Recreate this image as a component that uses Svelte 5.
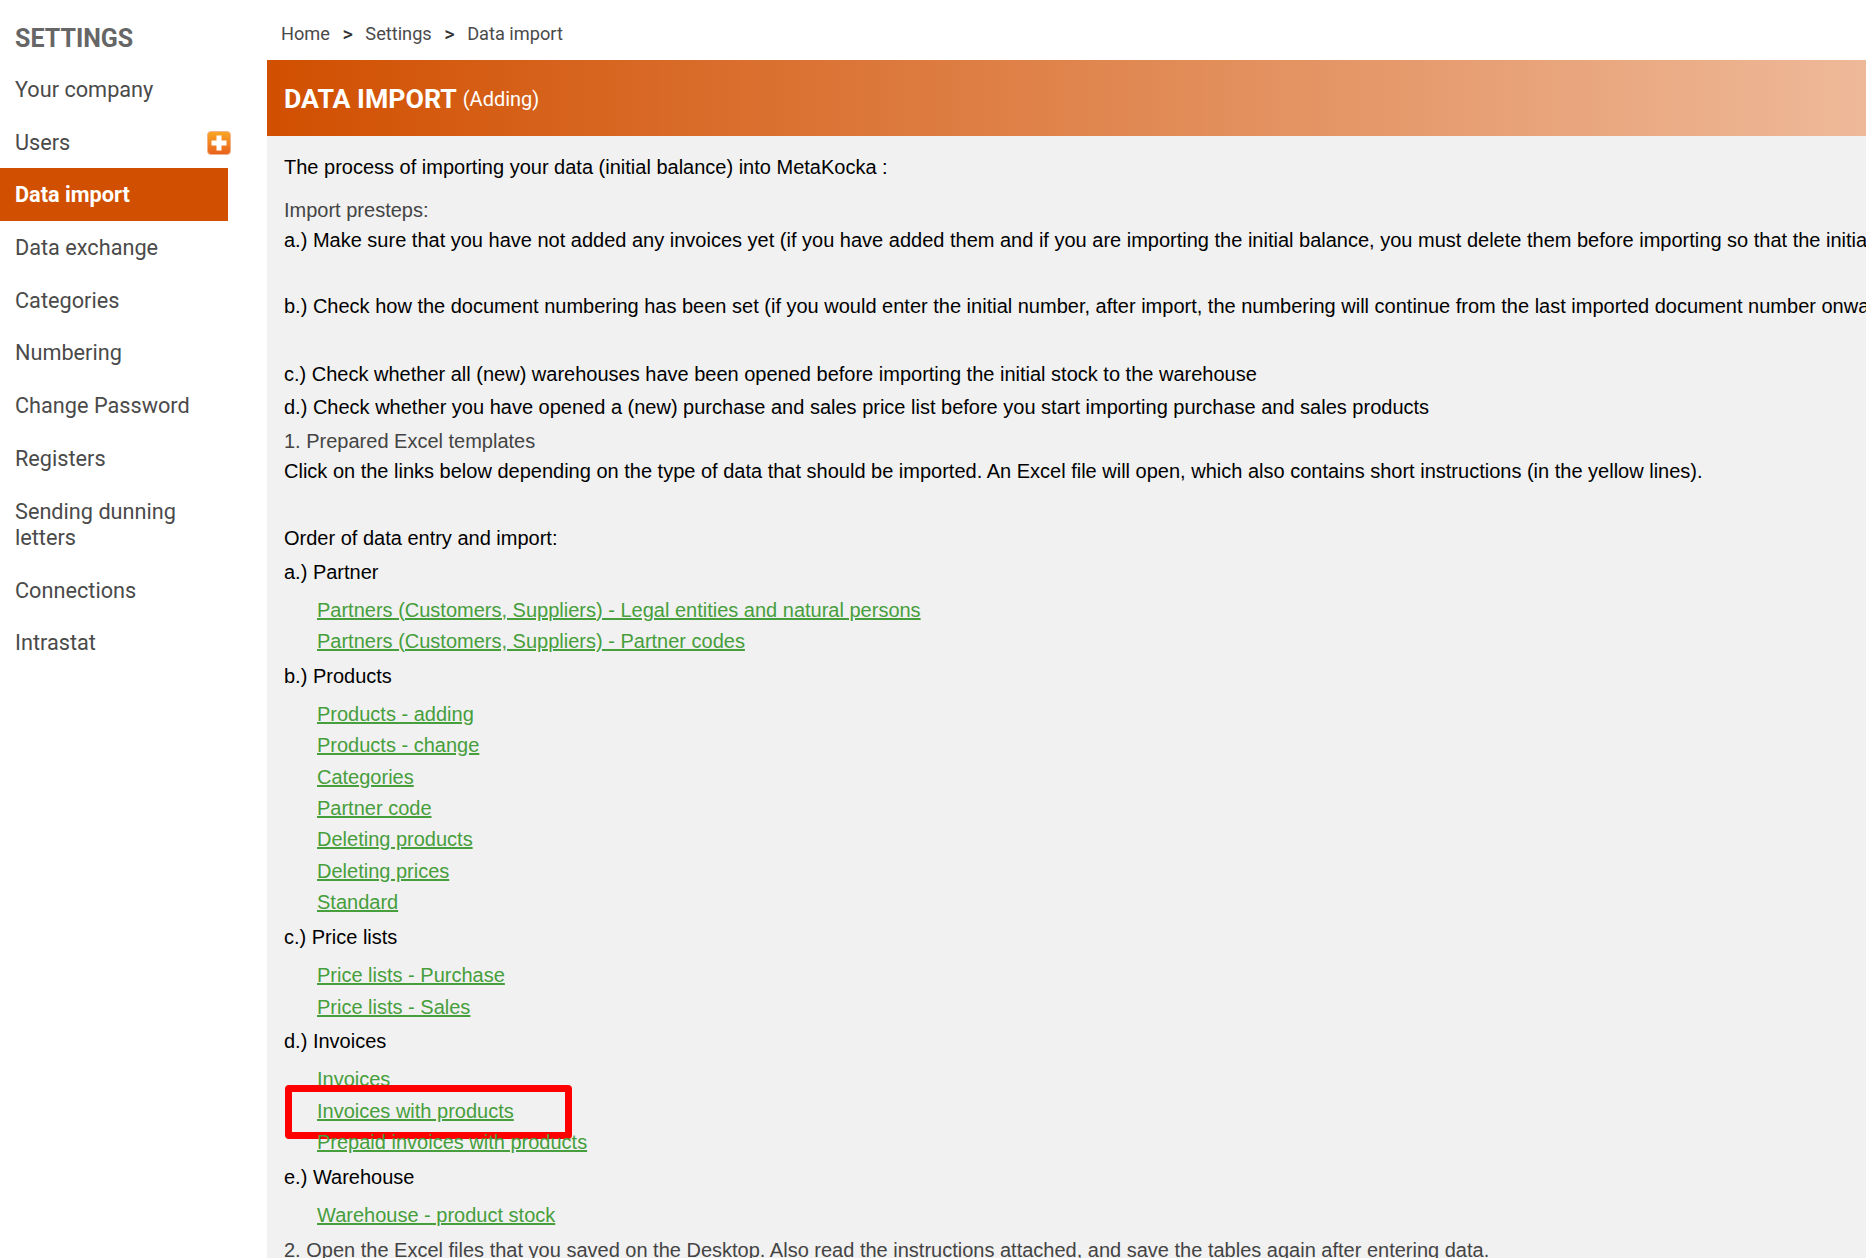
<script lang="ts">
	const menu = [
		{ label: 'Your company' },
		{ label: 'Users', add: true },
		{ label: 'Data import', active: true },
		{ label: 'Data exchange' },
		{ label: 'Categories' },
		{ label: 'Numbering' },
		{ label: 'Change Password' },
		{ label: 'Registers' },
		{ label: 'Sending dunning letters' },
		{ label: 'Connections' },
		{ label: 'Intrastat' },
	];

	const groups = [
		{
			title: 'a.) Partner',
			links: [
				'Partners (Customers, Suppliers) - Legal entities and natural persons',
				'Partners (Customers, Suppliers) - Partner codes',
			],
		},
		{
			title: 'b.) Products',
			links: [
				'Products - adding',
				'Products - change',
				'Categories',
				'Partner code',
				'Deleting products',
				'Deleting prices',
				'Standard',
			],
		},
		{ title: 'c.) Price lists', links: ['Price lists - Purchase', 'Price lists - Sales'] },
		{ title: 'd.) Invoices', links: ['Invoices', 'Invoices with products', 'Prepaid invoices with products'] },
		{ title: 'e.) Warehouse', links: ['Warehouse - product stock'] },
	];
</script>

<div class="page">
	<aside class="sidebar">
		<h2>SETTINGS</h2>
		<nav>
			{#each menu as item (item.label)}
				<a href="#top" class="item" class:active={item.active}>
					<span>{item.label}</span>
					{#if item.add}
						<svg class="add" width="24" height="24" viewBox="0 0 24 24" aria-hidden="true">
							<defs>
								<linearGradient id="addfill" x1="0" y1="0" x2="0" y2="1">
									<stop offset="0" stop-color="#f9a825" />
									<stop offset="1" stop-color="#e8601c" />
								</linearGradient>
							</defs>
							<rect x="0.5" y="0.5" width="23" height="23" rx="3.5" fill="url(#addfill)" stroke="#f0b48c" />
							<path d="M9.5 4.5h5v5h5v5h-5v5h-5v-5h-5v-5h5z" fill="#fff" />
						</svg>
					{/if}
				</a>
			{/each}
		</nav>
	</aside>

	<main>
		<div class="crumbs">
			<span>Home</span><b>&gt;</b><span>Settings</span><b>&gt;</b><span>Data import</span>
		</div>
		<header class="banner">
			<h1>DATA IMPORT</h1>
			<small>(Adding)</small>
		</header>
		<section class="body">
			<p class="intro">The process of importing your data (initial balance) into MetaKocka :</p>
			<p class="sub first">Import presteps:</p>
			<p class="after">a.) Make sure that you have not added any invoices yet (if you have added them and if you are importing the initial balance, you must delete them before importing so that the initial balance is correct)</p>
			<p class="blank"></p>
			<p>b.) Check how the document numbering has been set (if you would enter the initial number, after import, the numbering will continue from the last imported document number onwards)</p>
			<p class="blank narrow"></p>
			<p>c.) Check whether all (new) warehouses have been opened before importing the initial stock to the warehouse</p>
			<p>d.) Check whether you have opened a (new) purchase and sales price list before you start importing purchase and sales products</p>
			<p class="sub">1. Prepared Excel templates</p>
			<p class="after">Click on the links below depending on the type of data that should be imported. An Excel file will open, which also contains short instructions (in the yellow lines).</p>
			<p class="blank wide"></p>
			<p>Order of data entry and import:</p>

			{#each groups as group (group.title)}
				<p class="group">{group.title}</p>
				<ul>
					{#each group.links as link (link)}
						<li>
							<a href="#top">{link}</a>
							{#if link === 'Invoices with products'}
								<span class="marker"></span>
							{/if}
						</li>
					{/each}
				</ul>
			{/each}

			<p class="sub tail">2. Open the Excel files that you saved on the Desktop. Also read the instructions attached, and save the tables again after entering data.</p>
		</section>
	</main>
</div>

<style>
	:global(body) {
		margin: 0;
		background: #fff;
		overflow: hidden;
	}

	.page {
		display: flex;
		width: 1866px;
		height: 1258px;
		overflow: hidden;
	}

	.sidebar {
		flex: 0 0 267px;
		font-family: Roboto, sans-serif;
		font-size: 21.7px;
		color: #4a4a4a;
	}

	h2 {
		margin: 0;
		padding: 24px 0 0 15px;
		font-size: 25px;
		line-height: 30px;
		font-weight: 700;
		color: #666;
	}

	nav {
		width: 228px;
		margin-top: 9px;
	}

	.item {
		position: relative;
		display: block;
		padding: 14px 15px 12.2px;
		line-height: 26.5px;
		color: #4a4a4a;
		text-decoration: none;
	}

	.item.active {
		background: #d14f00;
		color: #fff;
		font-weight: 700;
	}

	.add {
		position: absolute;
		top: 15px;
		right: -3px;
	}

	main {
		flex: 1;
		min-width: 0;
		display: flex;
		flex-direction: column;
	}

	.crumbs {
		display: flex;
		gap: 12.5px;
		height: 60px;
		padding: 21px 0 0 14px;
		box-sizing: border-box;
		font-family: Roboto, sans-serif;
		font-size: 18.2px;
		line-height: 26px;
		color: #4a4a4a;
	}

	.crumbs b {
		font-size: 20px;
		font-weight: 500;
		color: #333;
	}

	.banner {
		display: flex;
		align-items: center;
		gap: 6px;
		height: 76px;
		padding: 2px 17px 0;
		box-sizing: border-box;
		background: linear-gradient(to right, #d14f00, #eeb999);
		color: #fff;
		font-family: Roboto, sans-serif;
	}

	h1 {
		margin: 0;
		font-size: 26.7px;
		line-height: 32px;
		font-weight: 700;
	}

	small {
		font-size: 20px;
	}

	.body {
		flex: 1;
		padding: 15px 17px 0;
		background: #f1f1f1;
		font-family: 'Liberation Sans', Arial, sans-serif;
		font-size: 20px;
		color: #000;
		white-space: nowrap;
		overflow: hidden;
	}

	p {
		margin: 0;
		line-height: 33.5px;
	}

	.blank {
		height: 35px;
	}

	.blank.narrow {
		height: 34.5px;
	}

	.blank.wide {
		height: 36.5px;
	}

	.sub {
		line-height: 32px;
		color: #444;
	}

	.first {
		margin-top: 9px;
	}

	.after {
		line-height: 29px;
	}

	.group {
		line-height: 33px;
	}

	ul {
		list-style: none;
		margin: 0;
		padding: 6px 0 2.5px 33px;
	}

	li {
		position: relative;
		line-height: 31.4px;
	}

	li a {
		color: #479e3c;
	}

	.marker {
		position: absolute;
		left: -32px;
		top: -11px;
		box-sizing: border-box;
		width: 287px;
		height: 54px;
		border: 7px solid #f00;
		border-radius: 4px;
	}
</style>
